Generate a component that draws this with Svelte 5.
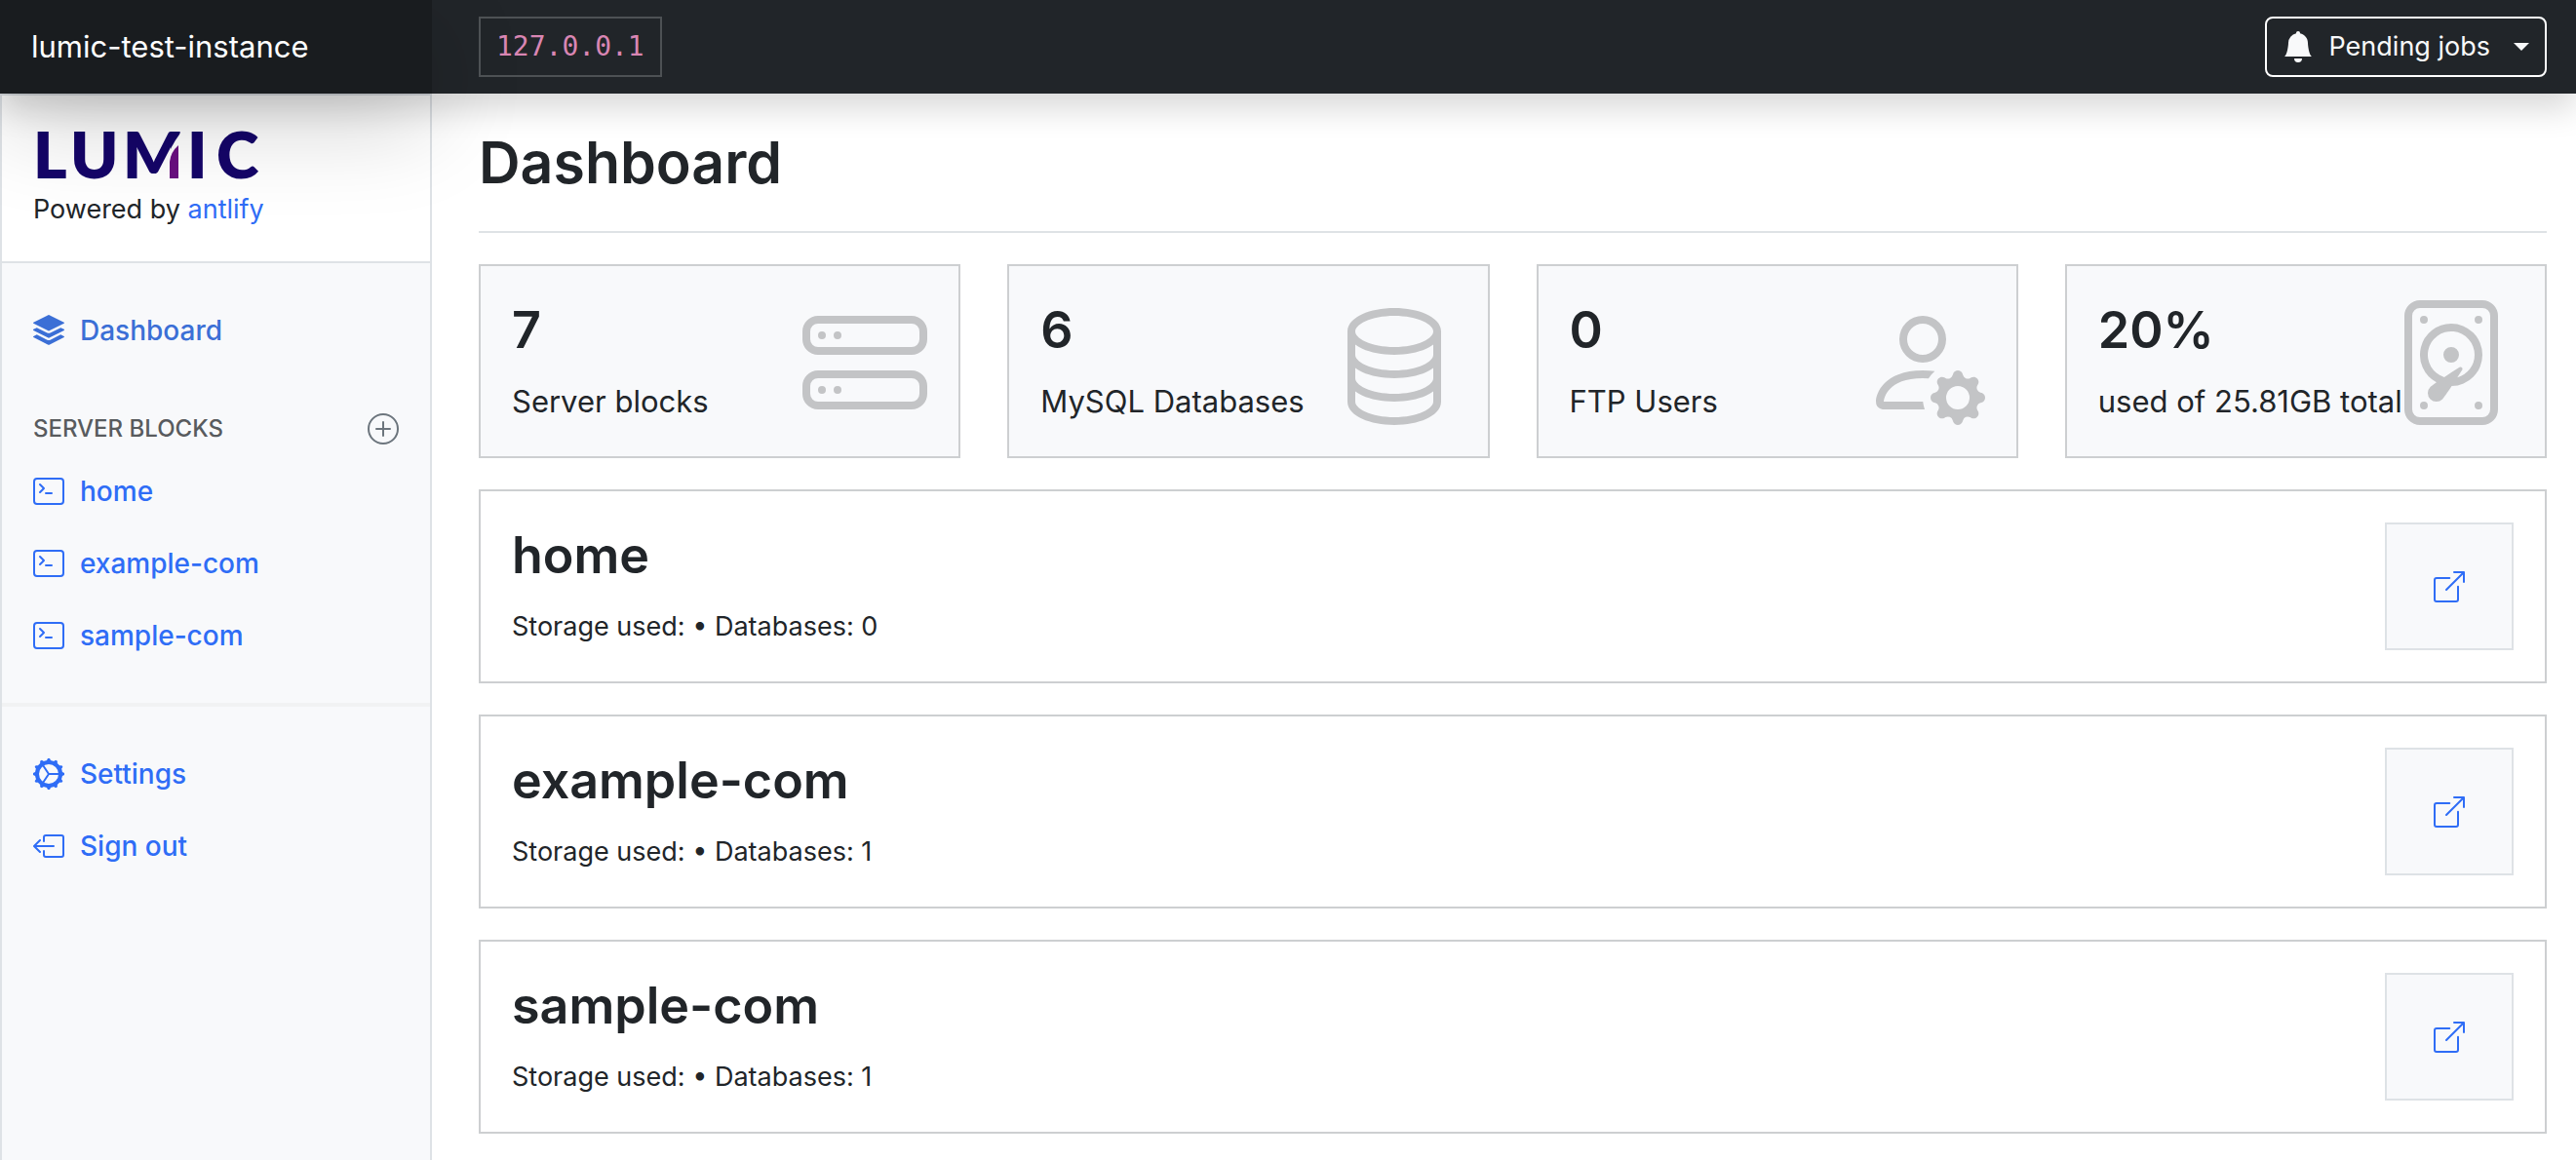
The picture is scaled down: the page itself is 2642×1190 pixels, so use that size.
<script>
  const stats = [
    { value: '7', label: 'Server blocks', icon: 'rack' },
    { value: '6', label: 'MySQL Databases', icon: 'database' },
    { value: '0', label: 'FTP Users', icon: 'person' },
    { value: '20%', label: 'used of 25.81GB total', icon: 'disk' },
  ];
  const blocks = [
    { name: 'home', databases: 0 },
    { name: 'example-com', databases: 1 },
    { name: 'sample-com', databases: 1 },
  ];
  const icons = {
    rack: [
      'M14 10a1 1 0 0 1 1 1v1a1 1 0 0 1-1 1H2a1 1 0 0 1-1-1v-1a1 1 0 0 1 1-1zM2 9a2 2 0 0 0-2 2v1a2 2 0 0 0 2 2h12a2 2 0 0 0 2-2v-1a2 2 0 0 0-2-2z',
      'M5 11.5a.5.5 0 1 1-1 0 .5.5 0 0 1 1 0m-2 0a.5.5 0 1 1-1 0 .5.5 0 0 1 1 0M14 3a1 1 0 0 1 1 1v1a1 1 0 0 1-1 1H2a1 1 0 0 1-1-1V4a1 1 0 0 1 1-1zM2 2a2 2 0 0 0-2 2v1a2 2 0 0 0 2 2h12a2 2 0 0 0 2-2V4a2 2 0 0 0-2-2z',
      'M5 4.5a.5.5 0 1 1-1 0 .5.5 0 0 1 1 0m-2 0a.5.5 0 1 1-1 0 .5.5 0 0 1 1 0',
    ],
    database: [
      'M4.318 2.687C5.234 2.271 6.536 2 8 2s2.766.27 3.682.687C12.644 3.125 13 3.627 13 4c0 .374-.356.875-1.318 1.313C10.766 5.729 9.464 6 8 6s-2.766-.27-3.682-.687C3.356 4.875 3 4.373 3 4c0-.374.356-.875 1.318-1.313M13 5.698V7c0 .374-.356.875-1.318 1.313C10.766 8.729 9.464 9 8 9s-2.766-.27-3.682-.687C3.356 7.875 3 7.373 3 7V5.698c.271.202.58.378.904.525C4.978 6.711 6.427 7 8 7s3.022-.289 4.096-.777A5 5 0 0 0 13 5.698M14 4c0-1.007-.875-1.755-1.904-2.223C11.022 1.289 9.573 1 8 1s-3.022.289-4.096.777C2.875 2.245 2 2.993 2 4v9c0 1.007.875 1.755 1.904 2.223C4.978 15.71 6.427 16 8 16s3.022-.289 4.096-.777C13.125 14.755 14 14.007 14 13zm-1 4.698V10c0 .374-.356.875-1.318 1.313C10.766 11.729 9.464 12 8 12s-2.766-.27-3.682-.687C3.356 10.875 3 10.373 3 10V8.698c.271.202.58.378.904.525C4.978 9.71 6.427 10 8 10s3.022-.289 4.096-.777A5 5 0 0 0 13 8.698m0 3V13c0 .374-.356.875-1.318 1.313C10.766 14.729 9.464 15 8 15s-2.766-.27-3.682-.687C3.356 13.875 3 13.373 3 13v-1.302c.271.202.58.378.904.525C4.978 12.71 6.427 13 8 13s3.022-.289 4.096-.777c.324-.147.633-.323.904-.525',
    ],
    person: [
      'M11 5a3 3 0 1 1-6 0 3 3 0 0 1 6 0M8 7a2 2 0 1 0 0-4 2 2 0 0 0 0 4m.256 7a4.5 4.5 0 0 1-.229-1.004H3c.001-.246.154-.986.832-1.664C4.484 10.68 5.711 10 8 10q.39 0 .74.025c.226-.341.496-.65.804-.918Q8.844 9.002 8 9c-5 0-6 3-6 4s1 1 1 1zm3.63-4.54c.18-.613 1.048-.613 1.229 0l.043.148a.64.64 0 0 0 .921.382l.136-.074c.561-.306 1.175.308.87.869l-.075.136a.64.64 0 0 0 .382.92l.149.045c.612.18.612 1.048 0 1.229l-.15.043a.64.64 0 0 0-.38.921l.074.136c.305.561-.309 1.175-.87.87l-.136-.075a.64.64 0 0 0-.92.382l-.045.149c-.18.612-1.048.612-1.229 0l-.043-.15a.64.64 0 0 0-.921-.38l-.136.074c-.561.305-1.175-.309-.87-.87l.075-.136a.64.64 0 0 0-.382-.92l-.148-.045c-.613-.18-.613-1.048 0-1.229l.148-.043a.64.64 0 0 0 .382-.921l-.074-.136c-.306-.561.308-1.175.869-.87l.136.075a.64.64 0 0 0 .92-.382zM14 12.5a1.5 1.5 0 1 0-3 0 1.5 1.5 0 0 0 3 0',
    ],
    disk: [
      'M12 2.5a.5.5 0 1 1-1 0 .5.5 0 0 1 1 0m0 11a.5.5 0 1 1-1 0 .5.5 0 0 1 1 0m-7.5.5a.5.5 0 1 0 0-1 .5.5 0 0 0 0 1M5 2.5a.5.5 0 1 1-1 0 .5.5 0 0 1 1 0M8 8a1 1 0 1 0 0-2 1 1 0 0 0 0 2',
      'M12 7a4 4 0 0 1-3.937 4c-.537.813-1.02 1.515-1.181 1.677a1.102 1.102 0 0 1-1.56-1.559c.1-.098.396-.314.795-.588A4 4 0 0 1 8 3a4 4 0 0 1 4 4m-1 0a3 3 0 1 0-3.891 2.865c.667-.44 1.396-.91 1.955-1.268.224-.144.483.115.34.34l-.62.96A3 3 0 0 0 11 7',
      'M2 2a2 2 0 0 1 2-2h8a2 2 0 0 1 2 2v12a2 2 0 0 1-2 2H4a2 2 0 0 1-2-2zm2-1a1 1 0 0 0-1 1v12a1 1 0 0 0 1 1h8a1 1 0 0 0 1-1V2a1 1 0 0 0-1-1z',
    ],
    stack: [
      'm14.12 10.163 1.715.858c.22.11.22.424 0 .534L8.267 15.34a.6.6 0 0 1-.534 0L.165 11.555a.299.299 0 0 1 0-.534l1.716-.858 5.317 2.659c.505.252 1.1.252 1.604 0l5.317-2.66z',
      'M7.733.063a.6.6 0 0 1 .534 0l7.568 3.784a.3.3 0 0 1 0 .535L8.267 8.165a.6.6 0 0 1-.534 0L.165 4.382a.299.299 0 0 1 0-.535z',
      'm14.12 6.576 1.715.858c.22.11.22.424 0 .534l-7.568 3.784a.6.6 0 0 1-.534 0L.165 7.968a.299.299 0 0 1 0-.534l1.716-.858 5.317 2.659c.505.252 1.1.252 1.604 0z',
    ],
    plus: [
      'M8 15A7 7 0 1 1 8 1a7 7 0 0 1 0 14m0 1A8 8 0 1 0 8 0a8 8 0 0 0 0 16',
      'M8 4a.5.5 0 0 1 .5.5v3h3a.5.5 0 0 1 0 1h-3v3a.5.5 0 0 1-1 0v-3h-3a.5.5 0 0 1 0-1h3v-3A.5.5 0 0 1 8 4',
    ],
    terminal: [
      'M6 9a.5.5 0 0 1 .5-.5h3a.5.5 0 0 1 0 1h-3A.5.5 0 0 1 6 9M3.854 4.146a.5.5 0 1 0-.708.708L4.793 6.5 3.146 8.146a.5.5 0 1 0 .708.708l2-2a.5.5 0 0 0 0-.708z',
      'M2 1a2 2 0 0 0-2 2v10a2 2 0 0 0 2 2h12a2 2 0 0 0 2-2V3a2 2 0 0 0-2-2zm12 1a1 1 0 0 1 1 1v10a1 1 0 0 1-1 1H2a1 1 0 0 1-1-1V3a1 1 0 0 1 1-1z',
    ],
    signout: [
      'M6 12.5a.5.5 0 0 0 .5.5h8a.5.5 0 0 0 .5-.5v-9a.5.5 0 0 0-.5-.5h-8a.5.5 0 0 0-.5.5v2a.5.5 0 0 1-1 0v-2A1.5 1.5 0 0 1 6.5 2h8A1.5 1.5 0 0 1 16 3.5v9a1.5 1.5 0 0 1-1.5 1.5h-8A1.5 1.5 0 0 1 5 12.5v-2a.5.5 0 0 1 1 0z',
      'M.146 8.354a.5.5 0 0 1 0-.708l3-3a.5.5 0 1 1 .708.708L1.707 7.5H10.5a.5.5 0 0 1 0 1H1.707l2.147 2.146a.5.5 0 0 1-.708.708z',
    ],
    external: [
      'M8.636 3.5a.5.5 0 0 0-.5-.5H1.5A1.5 1.5 0 0 0 0 4.5v10A1.5 1.5 0 0 0 1.5 16h10a1.5 1.5 0 0 0 1.5-1.5V7.864a.5.5 0 0 0-1 0V14.5a.5.5 0 0 1-.5.5h-10a.5.5 0 0 1-.5-.5v-10a.5.5 0 0 1 .5-.5h6.636a.5.5 0 0 0 .5-.5',
      'M16 .5a.5.5 0 0 0-.5-.5h-5a.5.5 0 0 0 0 1h3.793L6.146 9.146a.5.5 0 1 0 .708.708L15 1.707V5.5a.5.5 0 0 0 1 0z',
    ],
    bell: [
      'M8 16a2 2 0 0 0 2-2H6a2 2 0 0 0 2 2m.995-14.901a1 1 0 1 0-1.99 0A5 5 0 0 0 3 6c0 1.098-.5 6-2 7h14c-1.5-1-2-5.902-2-7 0-2.42-1.72-4.44-4.005-4.901',
    ],
  };
  const teeth = Array.from({ length: 12 }, (_, i) => i * 30);
</script>

{#snippet icon(name, cls)}
  <svg class={cls} viewBox="0 0 16 16" fill="currentColor" aria-hidden="true">
    {#each icons[name] as d}<path {d} />{/each}
  </svg>
{/snippet}

<div class="page">
  <header>
    <div class="brand"><a href="#home">lumic-test-instance</a></div>
    <div class="bar">
      <code>127.0.0.1</code>
      <button class="jobs" type="button">
        {@render icon('bell', 'small')}
        <span>Pending jobs</span>
        <svg class="caret" viewBox="0 0 16 8" aria-hidden="true"><path d="M0 0h16L8 8z" fill="currentColor" /></svg>
      </button>
    </div>
  </header>

  <div class="body">
    <aside>
      <div class="logo">
        <svg class="wordmark" viewBox="0 0 240 64" role="img" aria-label="LUMIC">
          <defs>
            <mask id="m-cut" maskUnits="userSpaceOnUse" x="90" y="-20" width="80" height="100">
              <rect x="90" y="-20" width="80" height="100" fill="#fff" />
              <path d="M137 80V34Q139 23 152 5H170V80Z" fill="#000" />
            </mask>
          </defs>
          <g class="letters">
            <text x="0" y="53">L</text>
            <text x="38" y="53">U</text>
            <text x="92" y="53" mask="url(#m-cut)">M</text>
            <text x="158" y="53">I</text>
            <text x="188" y="53">C</text>
          </g>
          <path d="M140 53V36Q141 26 149 19V53Z" fill="#6a0f80" />
        </svg>
        <p>Powered by <a href="#antlify">antlify</a></p>
      </div>

      <nav>
        <a class="active" href="#dashboard">{@render icon('stack', 'small')}Dashboard</a>
        <div class="group">
          <h2>SERVER BLOCKS</h2>
          <button type="button" aria-label="Add server block">{@render icon('plus', 'small')}</button>
        </div>
        {#each blocks as block}
          <a href="#{block.name}">{@render icon('terminal', 'small')}{block.name}</a>
        {/each}
        <hr />
        <a href="#settings">
          <svg class="small" viewBox="0 0 32 32" fill="none" stroke="currentColor" aria-hidden="true">
            <circle cx="16" cy="16" r="12" stroke-width="4" />
            {#each teeth as angle}
              <path d="M13 4 15 0h2l2 4z" fill="currentColor" stroke="none" transform="rotate({angle} 16 16)" />
            {/each}
            <path d="M27 16H16L10 7M16 16 10 25" stroke-width="2" />
          </svg>Settings
        </a>
        <a href="#signout">{@render icon('signout', 'small')}Sign out</a>
      </nav>
    </aside>

    <main>
      <div class="title"><h1>Dashboard</h1></div>
      <section class="stats">
        {#each stats as stat}
          <div class="card stat">
            <div class="text">
              <h3>{stat.value}</h3>
              <p>{stat.label}</p>
            </div>
            {@render icon(stat.icon, 'big')}
          </div>
        {/each}
      </section>
      {#each blocks as block}
        <section class="card block">
          <div class="text">
            <h3>{block.name}</h3>
            <p class="note">Storage used: • Databases: {block.databases}</p>
          </div>
          <a class="open" href="#open-{block.name}" aria-label="Open {block.name}">{@render icon('external', 'small')}</a>
        </section>
      {/each}
    </main>
  </div>
</div>

<style>
  :global(body) {
    margin: 0;
    background: #fff;
  }
  .page {
    display: flex;
    flex-direction: column;
    min-height: 100vh;
    color: #212529;
    font: 400 27px/42px Inter, 'Liberation Sans', sans-serif;
  }
  * {
    box-sizing: border-box;
  }
  h1, h2, h3, p {
    margin: 0;
  }
  a {
    color: #2f6df6;
    text-decoration: none;
  }
  button {
    font: inherit;
    cursor: pointer;
  }
  svg {
    display: block;
    flex: none;
  }
  .small {
    width: 32px;
    height: 32px;
  }

  header {
    position: relative;
    z-index: 1;
    display: flex;
    height: 96px;
    background: #212529;
    box-shadow: 0 16px 32px rgba(0, 0, 0, 0.15);
  }
  .brand {
    display: flex;
    align-items: center;
    width: 443px;
    padding: 0 32px;
    background: #191c1f;
    box-shadow: 0 32px 96px rgba(0, 0, 0, 0.175);
  }
  .brand a {
    color: #fff;
    font-size: 31px;
  }
  .bar {
    display: flex;
    flex: 1;
    align-items: center;
    justify-content: space-between;
    padding: 0 30px 0 48px;
  }
  code {
    padding: 8px 16px;
    border: 2px solid #4d5154;
    color: #d986b3;
    font: 28px/42px 'DejaVu Sans Mono', monospace;
  }
  .jobs {
    display: flex;
    align-items: center;
    padding: 8px 16px;
    border: 2px solid #fff;
    border-radius: 8px;
    background: none;
    color: #f8f9fa;
    gap: 16px;
  }
  .caret {
    width: 16px;
    height: 8px;
    margin-left: 8px;
  }

  .body {
    display: flex;
    flex: 1;
  }
  aside {
    width: 443px;
    border: solid #dee2e6;
    border-width: 2px 2px 0;
    background: #f8f9fb;
  }
  .logo {
    padding: 32px;
    border-bottom: 2px solid #dee2e6;
    background: #fff;
  }
  .wordmark {
    width: 240px;
    height: 64px;
    overflow: visible;
  }
  .letters {
    fill: #150569;
    font: 800 66px Lato, sans-serif;
  }
  nav {
    padding: 32px 0;
  }
  nav a {
    display: flex;
    align-items: center;
    gap: 16px;
    padding: 16px 32px;
    font-size: 28px;
    font-weight: 500;
  }
  .active {
    color: #3b6fd6;
  }
  .group {
    display: flex;
    align-items: center;
    justify-content: space-between;
    margin: 48px 32px 11px;
  }
  h2 {
    color: #585b5e;
    font-size: 24px;
    font-weight: 500;
    line-height: 32px;
  }
  .group button {
    padding: 0;
    border: 0;
    background: none;
    color: #6c757d;
  }
  hr {
    height: 4px;
    margin: 32px 0;
    border: 0;
    background: #f1f2f3;
  }

  main {
    flex: 1;
    min-width: 0;
    padding: 32px 30px 24px 48px;
  }
  .title {
    padding-bottom: 32px;
    border-bottom: 2px solid #dee2e6;
  }
  h1 {
    font-size: 59px;
    font-weight: 600;
    line-height: 77px;
  }
  .stats {
    display: grid;
    grid-template-columns: repeat(4, minmax(0, 1fr));
    gap: 48px;
    margin-top: 32px;
  }
  .card {
    display: flex;
    justify-content: space-between;
    padding: 32px;
    border: 2px solid #cdcfd1;
  }
  .stat {
    align-items: flex-end;
    background: #f8f9fb;
  }
  .text {
    flex: 1;
    min-width: 0;
    white-space: nowrap;
  }
  h3 {
    margin-bottom: 16px;
    font-size: 52px;
    font-weight: 600;
    line-height: 67px;
  }
  .stat p {
    font-size: 31px;
    line-height: 48px;
  }
  .big {
    width: 128px;
    height: 128px;
    color: #c3c4c6;
  }
  .block {
    margin-top: 32px;
  }
  .note {
    line-height: 48px;
  }
  .open {
    display: flex;
    align-items: center;
    justify-content: center;
    width: 132px;
    border: 2px solid #dee2e6;
    background: #f8f9fb;
  }
</style>
